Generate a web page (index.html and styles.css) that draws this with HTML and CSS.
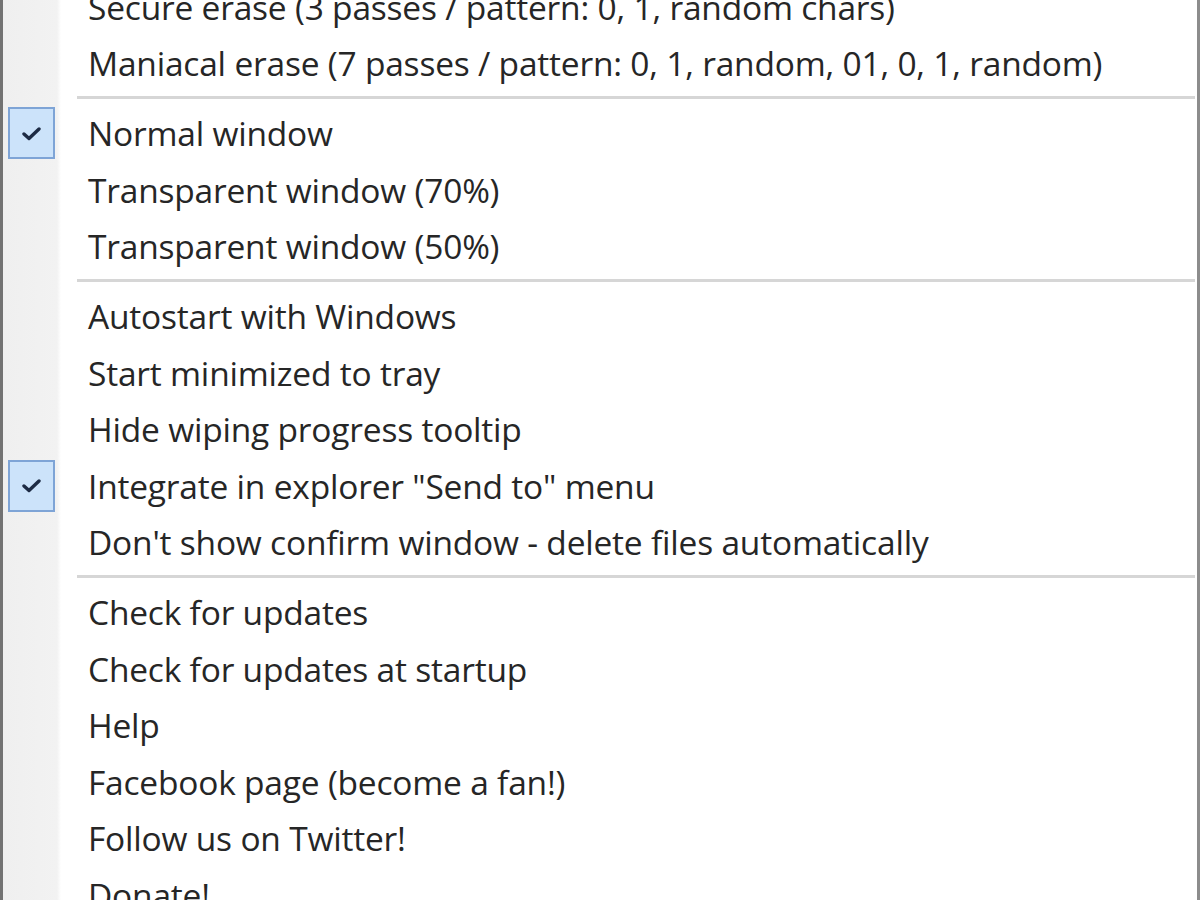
FILE: index.html
```html
<!DOCTYPE html>
<html lang="en">
  <head>
    <meta charset="UTF-8" />
    <meta name="viewport" content="width=device-width, initial-scale=1.0" />
    <title>Context menu</title>
    <link rel="stylesheet" href="styles.css">
  </head>
  <body>
    <div class="menu">
      <ul class="menu-list">
        <li class="item"><span class="gutter"></span><span class="label">Secure erase (3 passes / pattern: 0, 1, random chars)</span></li>
        <li class="item"><span class="gutter"></span><span class="label">Maniacal erase (7 passes / pattern: 0, 1, random, 01, 0, 1, random)</span></li>
        <li class="sep"></li>
        <li class="item checked">
          <span class="gutter">
            <span class="check">
              <svg width="19" height="14" viewBox="0 0 19 14"><path d="M2 7 L7 11.5 L17 2" fill="none" stroke="#1d2b44" stroke-width="3.4" stroke-linecap="round" stroke-linejoin="round"/></svg>
            </span>
          </span>
          <span class="label">Normal window</span>
        </li>
        <li class="item"><span class="gutter"></span><span class="label">Transparent window (70%)</span></li>
        <li class="item"><span class="gutter"></span><span class="label">Transparent window (50%)</span></li>
        <li class="sep"></li>
        <li class="item"><span class="gutter"></span><span class="label">Autostart with Windows</span></li>
        <li class="item"><span class="gutter"></span><span class="label">Start minimized to tray</span></li>
        <li class="item"><span class="gutter"></span><span class="label">Hide wiping progress tooltip</span></li>
        <li class="item checked">
          <span class="gutter">
            <span class="check">
              <svg width="19" height="14" viewBox="0 0 19 14"><path d="M2 7 L7 11.5 L17 2" fill="none" stroke="#1d2b44" stroke-width="3.4" stroke-linecap="round" stroke-linejoin="round"/></svg>
            </span>
          </span>
          <span class="label">Integrate in explorer "Send to" menu</span>
        </li>
        <li class="item"><span class="gutter"></span><span class="label">Don't show confirm window - delete files automatically</span></li>
        <li class="sep"></li>
        <li class="item"><span class="gutter"></span><span class="label">Check for updates</span></li>
        <li class="item"><span class="gutter"></span><span class="label">Check for updates at startup</span></li>
        <li class="item"><span class="gutter"></span><span class="label">Help</span></li>
        <li class="item"><span class="gutter"></span><span class="label">Facebook page (become a fan!)</span></li>
        <li class="item"><span class="gutter"></span><span class="label">Follow us on Twitter!</span></li>
        <li class="item"><span class="gutter"></span><span class="label">Donate!</span></li>
      </ul>
    </div>
  </body>
</html>
```

FILE: styles.css
```css
* {
  margin: 0px;
  padding: 0px;
}

body {
  width: 1200px;
  height: 900px;
  overflow: hidden;
  background-color: #ffffff;
  font-family: "Open Sans", "Noto Sans", sans-serif;
}

/* the menu frame, zoomed in: grey border left and right, light gutter */
.menu {
  height: 900px;
  overflow: hidden;
  border-left: 3px solid #727272;
  border-right: 3px solid #8c8c8c;
  background: linear-gradient(to right, #efefef 0px, #f2f2f2 54px, #ffffff 58px);
}

.menu-list {
  list-style: none;
  /* the top item is cut off by the screenshot */
  margin-top: -21.75px;
}

.item {
  display: flex;
  align-items: center;
  height: 56.5px;
}

.gutter {
  width: 85px;
  flex-shrink: 0;
  display: flex;
  align-items: center;
}

.check {
  width: 47px;
  height: 52px;
  margin-left: 5px;
  box-sizing: border-box;
  border: 2px solid #7ea4d6;
  background-color: #cce3fa;
  display: flex;
  align-items: center;
  justify-content: center;
}

.check svg {
  margin-top: 1px;
}

.label {
  font-size: 33.5px;
  color: #262626;
  white-space: nowrap;
  letter-spacing: -0.2px;
}

.sep {
  height: 3px;
  margin: 5px 2px 5.5px 74px;
  background-color: #d6d6d6;
}
```
